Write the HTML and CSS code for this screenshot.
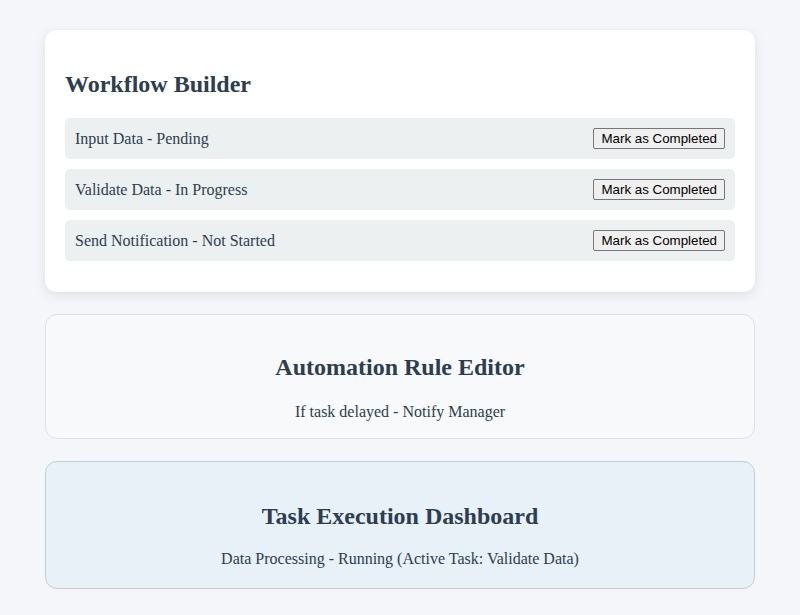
FILE: index.html
```html
<!DOCTYPE html>
<html lang="en">
<head>
<meta charset="utf-8">
<title>Workflow</title>
<link rel="stylesheet" href="styles.css">
</head>
<body>
<div class="container">
  <section class="card builder">
    <h2>Workflow Builder</h2>
    <div class="step"><span>Input Data - Pending</span><button>Mark as Completed</button></div>
    <div class="step"><span>Validate Data - In Progress</span><button>Mark as Completed</button></div>
    <div class="step"><span>Send Notification - Not Started</span><button>Mark as Completed</button></div>
  </section>
  <section class="card editor">
    <h2>Automation Rule Editor</h2>
    <p>If task delayed - Notify Manager</p>
  </section>
  <section class="card dashboard">
    <h2>Task Execution Dashboard</h2>
    <p>Data Processing - Running (Active Task: Validate Data)</p>
  </section>
</div>
</body>
</html>
```
FILE: styles.css
```css
html, body {
  margin: 0;
  padding: 0;
}
body {
  background: #f4f6f9;
  font-family: "Liberation Serif", "Times New Roman", serif;
  color: #2c3e50;
}
.container {
  width: 710px;
  margin: 0 auto;
  padding: 30px 0;
  display: flex;
  flex-direction: column;
  gap: 22px;
}
.card {
  border-radius: 12px;
  padding: 20px;
}
.card h2 {
  font-size: 24px;
  font-weight: bold;
  margin: 21px 0 20px;
  color: #2c3e50;
}
.card p {
  margin: 0;
  font-size: 16px;
}
.builder {
  background: #ffffff;
  box-shadow: 0 3px 12px rgba(0, 0, 0, 0.1);
  padding-bottom: 21px;
}
.step {
  display: flex;
  justify-content: space-between;
  align-items: center;
  background: #ecf0f1;
  border-radius: 5px;
  padding: 10px;
  margin-bottom: 10px;
  font-size: 16px;
}
.step button {
  font-family: "Liberation Sans", Arial, sans-serif;
  font-size: 13.33px;
  color: #000;
  background: #efefef;
  border: 1px solid #767676;
  border-radius: 2px;
  padding: 2px 7px;
}
.editor {
  background: #f8f9fa;
  border: 1px solid #dde1e5;
  text-align: center;
  padding-bottom: 17px;
}
.editor h2 {
  margin: 19px 0 22px;
}
.dashboard {
  background: #e8f0f8;
  border: 1px solid #c5ccd4;
  text-align: center;
}
```
